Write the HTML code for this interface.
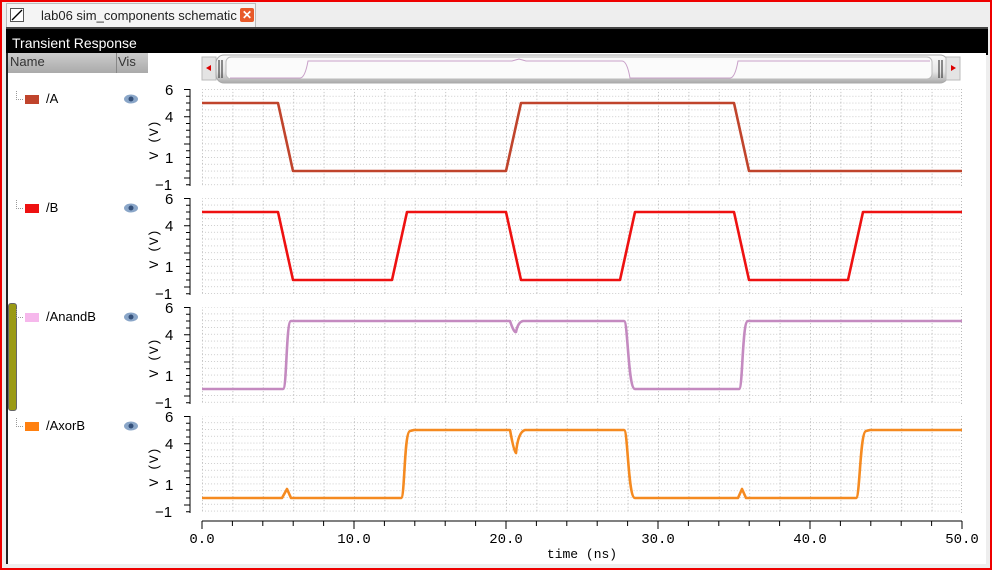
<!DOCTYPE html>
<html><head><meta charset="utf-8"><style>
body{margin:0;width:992px;height:570px;overflow:hidden;background:#fff;font-family:"Liberation Sans",sans-serif}
.frame{position:absolute;left:0;top:0;width:988px;height:566px;border:2px solid #e00;background:#eeeeee}
.tab{position:absolute;left:4px;top:1px;width:248px;height:24px;background:#f4f4f4;border:1px solid #bbb;border-bottom:none;font-size:13px;color:#222}
.title{position:absolute;left:4px;top:25px;width:982px;height:26px;background:#000;color:#fff;font-size:14px;line-height:28px;border-top:2px solid #444}
.title span{margin-left:6px}
.left{position:absolute;left:4px;top:51px;width:141px;height:511px;background:#fff;border-left:2px solid #222;border-right:2px solid #aaa}
.hdr{position:absolute;left:0;top:0;width:141px;height:20px;background:linear-gradient(#ccc,#aaa);font-size:13px;color:#333;line-height:17px}
.row{position:absolute;left:0;font-size:13px;color:#000}
.sw{position:absolute;left:17px;top:0;width:14px;height:9px}
.eye{position:absolute;left:115px;top:-2px}
</style></head><body>
<div class="frame">
<div class="tab"><div style="position:absolute;left:3px;top:4px;width:12px;height:12px;border:1px solid #555;background:#fff"><svg width="12" height="12"><path d="M1 11 L11 1" stroke="#000" stroke-width="1.3"/></svg></div>
<span style="position:absolute;left:34px;top:4px">lab06 sim_components schematic</span>
<div style="position:absolute;left:233px;top:4px;width:14px;height:14px;background:#e85a2a;border-radius:2px;color:#fff;font-size:12px;line-height:14px;text-align:center;font-weight:bold">✕</div></div>
<div class="title"><span>Transient Response</span></div>
<div class="left">
<div class="hdr"><span style="position:absolute;left:2px">Name</span><span style="position:absolute;left:110px">Vis</span><div style="position:absolute;left:108px;top:0;width:1px;height:20px;background:#888"></div></div>
<div style="position:absolute;left:0;top:250px;width:7px;height:106px;background:#9a9a14;border-radius:3px;border:1px solid #666"></div>
<div class="row" style="top:42px"><svg style="position:absolute;left:8px;top:-4px" width="10" height="12"><path d="M0.5 0V8.5H8" stroke="#999" stroke-dasharray="1,1" fill="none"/></svg><div class="sw" style="background:#c0442c"></div><span style="position:absolute;left:38px;top:-4px">/A</span><svg class="eye" width="16" height="12"><ellipse cx="8" cy="6" rx="7" ry="4.5" fill="#8aa6c8"/><circle cx="8" cy="6" r="2.5" fill="#34507a"/></svg></div>
<div class="row" style="top:151px"><svg style="position:absolute;left:8px;top:-4px" width="10" height="12"><path d="M0.5 0V8.5H8" stroke="#999" stroke-dasharray="1,1" fill="none"/></svg><div class="sw" style="background:#ee1111"></div><span style="position:absolute;left:38px;top:-4px">/B</span><svg class="eye" width="16" height="12"><ellipse cx="8" cy="6" rx="7" ry="4.5" fill="#8aa6c8"/><circle cx="8" cy="6" r="2.5" fill="#34507a"/></svg></div>
<div class="row" style="top:260px"><svg style="position:absolute;left:8px;top:-4px" width="10" height="12"><path d="M0.5 0V8.5H8" stroke="#999" stroke-dasharray="1,1" fill="none"/></svg><div class="sw" style="background:#f6b8ec"></div><span style="position:absolute;left:38px;top:-4px">/AnandB</span><svg class="eye" width="16" height="12"><ellipse cx="8" cy="6" rx="7" ry="4.5" fill="#8aa6c8"/><circle cx="8" cy="6" r="2.5" fill="#34507a"/></svg></div>
<div class="row" style="top:369px"><svg style="position:absolute;left:8px;top:-4px" width="10" height="12"><path d="M0.5 0V8.5H8" stroke="#999" stroke-dasharray="1,1" fill="none"/></svg><div class="sw" style="background:#ff8010"></div><span style="position:absolute;left:38px;top:-4px">/AxorB</span><svg class="eye" width="16" height="12"><ellipse cx="8" cy="6" rx="7" ry="4.5" fill="#8aa6c8"/><circle cx="8" cy="6" r="2.5" fill="#34507a"/></svg></div>
</div>
</div>
<svg style="position:absolute;left:0;top:0" width="992" height="570" font-family="Liberation Mono, monospace">
<defs>
<pattern id="g" x="202" y="89" width="30.4" height="6.8" patternUnits="userSpaceOnUse">
<line x1="0.5" y1="0" x2="0.5" y2="6.8" stroke="#bbb" stroke-dasharray="1,2"/>
<line x1="0" y1="0.5" x2="30.4" y2="0.5" stroke="#ccc" stroke-dasharray="1,2"/>
</pattern>
<linearGradient id="sb" x1="0" y1="0" x2="0" y2="1"><stop offset="0" stop-color="#fafafa"/><stop offset="0.6" stop-color="#e6e6e6"/><stop offset="1" stop-color="#aaa"/></linearGradient>
</defs>
<rect x="148" y="53" width="838" height="511" fill="#fff"/>
<rect x="202" y="57" width="14" height="23" fill="#e4e4e4" stroke="#bbb"/>
<path d="M206 68 L211 65 L211 71Z" fill="#d00"/>
<rect x="216" y="55" width="732" height="28" rx="8" fill="url(#sb)" stroke="#aaa"/>
<rect x="226" y="57" width="706" height="22" rx="5" fill="#fbfbfb" stroke="#bbb"/>
<path d="M219 60V78M222 60V78M939 60V78M942 60V78" stroke="#222"/>
<rect x="946" y="57" width="14" height="23" fill="#e4e4e4" stroke="#bbb"/>
<path d="M956 68 L951 65 L951 71Z" fill="#d00"/>
<path d="M230 78 L300 78 Q305 78 308 61 L512 61 L519 59 L526 61 L622 61 Q627 61 630 78 L730 78 Q735 78 738 61 L930 61" fill="none" stroke="#c8a0c8"/>
<rect x="202" y="89" width="760" height="97" fill="url(#g)"/>
<rect x="202" y="198" width="760" height="97" fill="url(#g)"/>
<rect x="202" y="307" width="760" height="97" fill="url(#g)"/>
<rect x="202" y="416" width="760" height="97" fill="url(#g)"/>
<g stroke="#bbb" stroke-dasharray="1,2"><line x1="961.5" y1="89" x2="961.5" y2="186"/><line x1="961.5" y1="198" x2="961.5" y2="295"/><line x1="961.5" y1="307" x2="961.5" y2="404"/><line x1="961.5" y1="416" x2="961.5" y2="513"/></g>
<g id="ax" font-size="15" fill="#000" font-family="Liberation Sans, sans-serif">
<text x="165" y="95">6</text><text x="165" y="122">4</text><text x="165" y="163">1</text><text x="155" y="190">−1</text>
<text transform="translate(158,140) rotate(-90)" text-anchor="middle" font-size="13" font-family="Liberation Mono, monospace">V (V)</text>
<path d="M190 89V186M184 89.5H190M186 96.3H190M186 103H190M186 110H190M184 116.7H190M186 123.5H190M186 130.3H190M186 137H190M184 144H190M186 150.7H190M186 157.5H190M186 164.3H190M186 171H190M184 178H190M186 184.8H190" stroke="#000" fill="none"/>
</g>
<use href="#ax" y="109"/><use href="#ax" y="218"/><use href="#ax" y="327"/>
<g fill="none" stroke-width="2.6" stroke-linejoin="round">
<path d="M202,103 L278,103 L293,171 L506,171 L521,103 L734,103 L749,171 L962,171" stroke="#c0442c"/>
<path d="M202,212 L278,212 L293,280 L392,280 L407,212 L506,212 L521,280 L620,280 L635,212 L734,212 L749,280 L848,280 L863,212 L962,212" stroke="#ee1111"/>
<path d="M202,389 L283,389 C287,389 286,321 291,321 L510,321 Q514,333 516,332 Q518,322 523,321 L624,321 C628,321 628,389 635,389 L739,389 C743,389 742,321 748,321 L962,321" stroke="#c48ac0"/>
<path d="M202,498 L282,498 L287,489 L291,498 L401,498 C405,498 404,432 410,431 L414,430 L510,430 Q514,452 516,453 Q518,432 525,430 L624,430 C628,430 628,498 635,498 L738,498 L742,489 L746,498 L856,498 C860,498 860,432 866,431 L870,430 L962,430" stroke="#f58a20"/>
</g>
<path d="M202 521H962M202 521v8M232.4 521v5M262.8 521v5M293.2 521v5M323.6 521v5M354 521v8M384.4 521v5M414.8 521v5M445.2 521v5M475.6 521v5M506 521v8M536.4 521v5M566.8 521v5M597.2 521v5M627.6 521v5M658 521v8M688.4 521v5M718.8 521v5M749.2 521v5M779.6 521v5M810 521v8M840.4 521v5M870.8 521v5M901.2 521v5M931.6 521v5M962 521v8" stroke="#000" fill="none"/>
<g font-size="14" text-anchor="middle"><text x="202" y="543">0.0</text><text x="354" y="543">10.0</text><text x="506" y="543">20.0</text><text x="658" y="543">30.0</text><text x="810" y="543">40.0</text><text x="962" y="543">50.0</text>
<text x="582" y="558" font-size="13">time (ns)</text></g>
</svg>
</body></html>
